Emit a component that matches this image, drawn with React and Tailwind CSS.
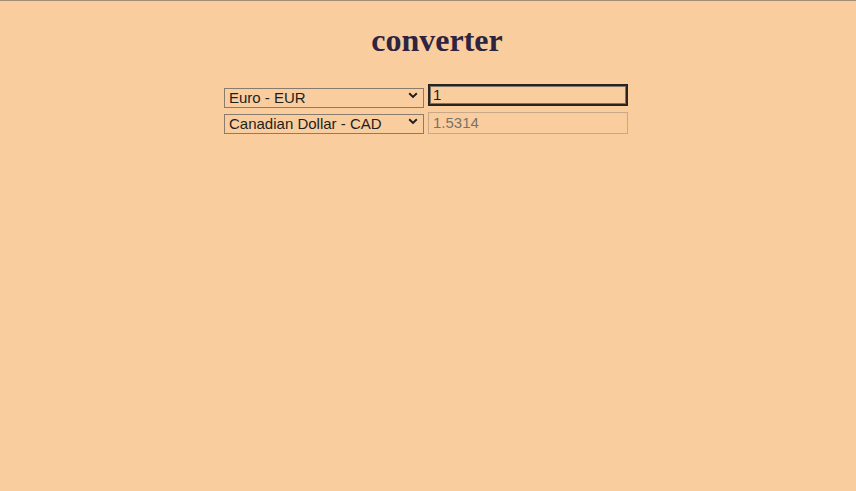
import React, { useState } from 'react';

const currencies = [
  { code: 'EUR', name: 'Euro' },
  { code: 'CAD', name: 'Canadian Dollar' },
  { code: 'USD', name: 'US Dollar' },
  { code: 'GBP', name: 'British Pound' },
];

const Chevron = () => (
  <svg
    className="pointer-events-none absolute right-[6px] top-[6px] w-[10px] h-[7px]"
    viewBox="0 0 10 7"
    fill="none"
  >
    <path d="M1.2 1.3 L5 5 L8.8 1.3" stroke="#1c1c1c" strokeWidth="1.9" />
  </svg>
);

const CurrencySelect = ({ value, onChange, className = '' }) => (
  <div className={`relative w-[200px] h-[20px] ${className}`}>
    <select
      value={value}
      onChange={(e) => onChange(e.target.value)}
      className="appearance-none w-full h-full border border-[#8a7c6c] bg-transparent pl-[4px] text-[15px] leading-[18px] text-[#1e1e1e] font-['Liberation_Sans',Arial,sans-serif] outline-none"
    >
      {currencies.map((c) => (
        <option key={c.code} value={c.code}>
          {c.name} - {c.code}
        </option>
      ))}
    </select>
    <Chevron />
  </div>
);

export default function App() {
  const [from, setFrom] = useState('EUR');
  const [to, setTo] = useState('CAD');
  const [amount, setAmount] = useState('1');

  return (
    <div className="min-h-[491px] bg-[#f9cd9e] border-t border-[#a68c76] font-['Liberation_Serif','Times_New_Roman',serif]">
      <h1 className="mt-[21px] mb-[25px] pl-[18px] text-center text-[32px] leading-[37px] font-bold text-[#2e2440]">
        converter
      </h1>

      <div className="flex flex-col items-start pl-[224px] gap-[6px]">
        <div className="flex items-start gap-[4px] h-[22px]">
          <CurrencySelect value={from} onChange={setFrom} className="mt-[2px]" />
          <input
            value={amount}
            onChange={(e) => setAmount(e.target.value)}
            className="w-[200px] h-[22px] border-2 border-[#2a2420] shadow-[inset_0_0_0_1px_#7d7468] bg-transparent px-[3px] text-[15px] text-[#1e1e1e] font-['Liberation_Sans',Arial,sans-serif] outline-none"
          />
        </div>
        <div className="flex items-start gap-[4px] h-[22px]">
          <CurrencySelect value={to} onChange={setTo} />
          <input
            value="1.5314"
            disabled
            readOnly
            className="w-[200px] h-[22px] border border-[#c9a888] bg-transparent px-[4px] text-[15px] text-[#7a726a] font-['Liberation_Sans',Arial,sans-serif] outline-none"
          />
        </div>
      </div>
    </div>
  );
}
